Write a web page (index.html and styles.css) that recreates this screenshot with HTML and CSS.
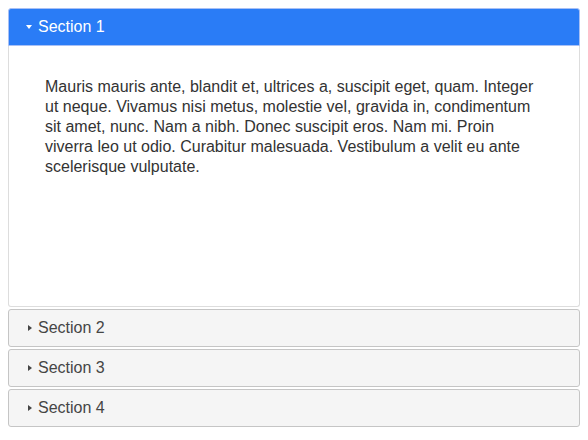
FILE: index.html
```html
<!DOCTYPE html>
<html>
<head>
<meta charset="utf-8">
<link rel="stylesheet" href="styles.css">
</head>
<body>
<div class="accordion">
  <h3 class="header active"><span class="icon icon-down"></span>Section 1</h3>
  <div class="content">
    <p>Mauris mauris ante, blandit et, ultrices a, suscipit eget, quam. Integer ut neque. Vivamus nisi metus, molestie vel, gravida in, condimentum sit amet, nunc. Nam a nibh. Donec suscipit eros. Nam mi. Proin viverra leo ut odio. Curabitur malesuada. Vestibulum a velit eu ante scelerisque vulputate.</p>
  </div>
  <h3 class="header"><span class="icon icon-right"></span>Section 2</h3>
  <h3 class="header"><span class="icon icon-right"></span>Section 3</h3>
  <h3 class="header"><span class="icon icon-right"></span>Section 4</h3>
</div>
</body>
</html>
```
FILE: styles.css
```css
body {
  margin: 8px;
  font-family: "Liberation Sans", Arial, sans-serif;
  background: #fff;
}
.accordion {
  display: flex;
  flex-direction: column;
}
.header {
  margin: 2px 0 0 0;
  height: 38px;
  box-sizing: border-box;
  display: flex;
  align-items: center;
  padding: 0 8px 0 17px;
  font-size: 16px;
  font-weight: normal;
  color: #454545;
  background: #f5f5f5;
  border: 1px solid #c5c5c5;
  border-radius: 3px;
}
.header:first-child {
  margin-top: 0;
}
.header.active {
  background: #2a7cf6;
  border-color: #a8c0f5;
  color: #fff;
  border-radius: 3px 3px 0 0;
}
.icon {
  width: 12px;
  height: 16px;
  display: flex;
  align-items: center;
  justify-content: flex-start;
}
.icon-down::before {
  content: "";
  border-left: 3.5px solid transparent;
  border-right: 3.5px solid transparent;
  border-top: 4px solid #fff;
}
.icon-right::before {
  content: "";
  border-top: 3.5px solid transparent;
  border-bottom: 3.5px solid transparent;
  border-left: 4px solid #454545;
  margin-left: 2px;
}
.content {
  height: 261px;
  box-sizing: border-box;
  border: 1px solid #dddddd;
  border-top: 0;
  border-radius: 0 0 3px 3px;
  padding: 16px 35px 16px 36px;
  color: #333;
}
.content p {
  margin: 15px 0;
  font-size: 16px;
  line-height: 20px;
}
```
